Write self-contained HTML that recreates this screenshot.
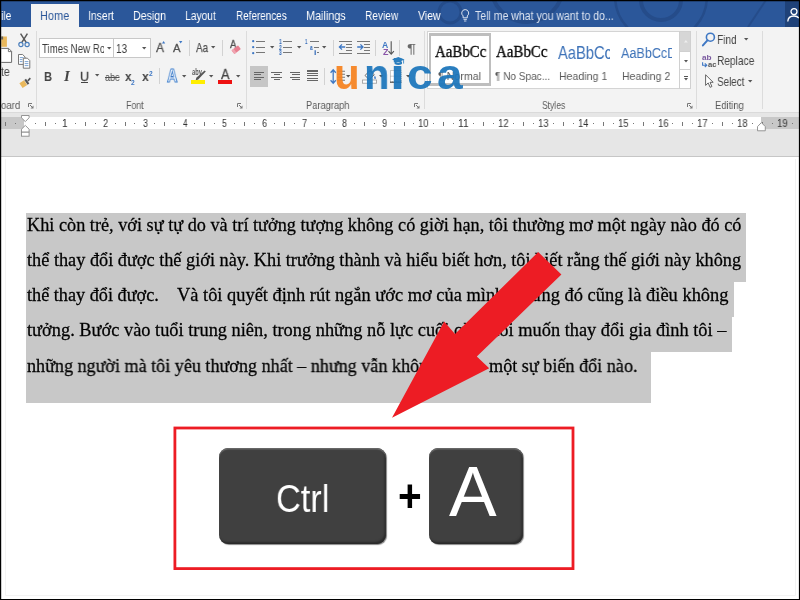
<!DOCTYPE html>
<html><head><meta charset="utf-8"><title>Word</title>
<style>
*{box-sizing:border-box;margin:0;padding:0}
html,body{width:800px;height:600px;overflow:hidden;background:#fff}
body{position:relative;font-family:"Liberation Sans",sans-serif;color:#444}
.abs{position:absolute}
svg{overflow:visible}
.t{position:absolute;white-space:pre;transform-origin:0 0;display:block;will-change:transform}
</style></head><body>
<div class="abs" style="left:0.00px;top:0.00px;width:800.00px;height:27.00px;background:#2b579a;"></div>
<svg class="abs" style="left:0.00px;top:0.00px;overflow:hidden;" width="800" height="27" viewBox="0 0 800 27"><g fill="none" stroke="#254c8a" stroke-width="4"><circle cx="527" cy="-14" r="36"/><circle cx="661" cy="0" r="20"/><circle cx="661" cy="-4" r="46" stroke-width="2.5"/><circle cx="450" cy="12" r="11" stroke-width="3"/><path d="M748 27 L766 0" stroke-width="2"/></g></svg>
<div class="abs" style="left:31.00px;top:3.60px;width:48.00px;height:24.00px;background:#f3f3f3;"></div>
<div class="abs" style="left:0.00px;top:26.50px;width:800.00px;height:86.00px;background:#f3f3f3;"></div>
<div class="abs" style="left:0.00px;top:112.40px;width:800.00px;height:44.60px;background:#e6e6e6;border-top:1px solid #dadada;border-bottom:1px solid #c6c6c6;"></div>
<div class="abs" style="left:0.00px;top:117.00px;width:800.00px;height:11.80px;background:#c8c8c8;"></div>
<div class="abs" style="left:23.50px;top:117.00px;width:737.30px;height:11.80px;background:#fff;"></div>
<span class="t" style="left:0.93px;top:8.65px;font-size:12.50px;line-height:14px;color:#fff;font-family:'Liberation Sans',sans-serif;transform:scale(0.8393,1.0000);">ile</span>
<span class="t" style="left:39.62px;top:8.65px;font-size:12.50px;line-height:14px;color:#2b579a;font-family:'Liberation Sans',sans-serif;transform:scale(0.8774,1.0000);">Home</span>
<span class="t" style="left:87.59px;top:8.65px;font-size:12.50px;line-height:14px;color:#fff;font-family:'Liberation Sans',sans-serif;transform:scale(0.8272,1.0000);">Insert</span>
<span class="t" style="left:133.15px;top:8.65px;font-size:12.50px;line-height:14px;color:#fff;font-family:'Liberation Sans',sans-serif;transform:scale(0.8495,1.0000);">Design</span>
<span class="t" style="left:185.18px;top:8.65px;font-size:12.50px;line-height:14px;color:#fff;font-family:'Liberation Sans',sans-serif;transform:scale(0.8219,1.0000);">Layout</span>
<span class="t" style="left:235.71px;top:8.65px;font-size:12.50px;line-height:14px;color:#fff;font-family:'Liberation Sans',sans-serif;transform:scale(0.7920,1.0000);">References</span>
<span class="t" style="left:306.14px;top:8.65px;font-size:12.50px;line-height:14px;color:#fff;font-family:'Liberation Sans',sans-serif;transform:scale(0.8649,1.0000);">Mailings</span>
<span class="t" style="left:364.69px;top:8.65px;font-size:12.50px;line-height:14px;color:#fff;font-family:'Liberation Sans',sans-serif;transform:scale(0.8105,1.0000);">Review</span>
<span class="t" style="left:417.92px;top:8.65px;font-size:12.50px;line-height:14px;color:#fff;font-family:'Liberation Sans',sans-serif;transform:scale(0.8396,1.0000);">View</span>
<span class="t" style="left:474.75px;top:8.65px;font-size:12.50px;line-height:14px;color:#dbe3f0;font-family:'Liberation Sans',sans-serif;transform:scale(0.8425,1.0000);">Tell me what you want to do...</span>
<div class="abs" style="left:26.30px;top:212.50px;width:720.20px;height:69.10px;background:#c8c8c8;"></div>
<div class="abs" style="left:26.30px;top:281.60px;width:707.30px;height:35.00px;background:#c8c8c8;"></div>
<div class="abs" style="left:26.30px;top:316.50px;width:705.40px;height:35.00px;background:#c8c8c8;"></div>
<div class="abs" style="left:26.30px;top:351.40px;width:624.70px;height:51.60px;background:#c8c8c8;"></div>
<span class="t" style="left:26.80px;top:213.71px;font-size:18.20px;line-height:20px;color:#000;font-family:'Liberation Serif',serif;transform:scale(1.0032,1.0580);-webkit-text-stroke:0.25px #000;">Khi còn trẻ, với sự tự do và trí tưởng tượng không có giời hạn, tôi thường mơ một ngày nào đó có</span>
<span class="t" style="left:27.10px;top:248.91px;font-size:18.20px;line-height:20px;color:#000;font-family:'Liberation Serif',serif;transform:scale(1.0041,1.0580);-webkit-text-stroke:0.25px #000;">thể thay đổi được thế giới này. Khi trưởng thành và hiểu biết hơn, tôi biết rằng thế giới này không</span>
<span class="t" style="left:27.30px;top:284.11px;font-size:18.20px;line-height:20px;color:#000;font-family:'Liberation Serif',serif;transform:scale(1.0015,1.0580);-webkit-text-stroke:0.25px #000;">thể thay đổi được.</span>
<span class="t" style="left:177.40px;top:284.11px;font-size:18.20px;line-height:20px;color:#000;font-family:'Liberation Serif',serif;transform:scale(1.0116,1.0580);-webkit-text-stroke:0.25px #000;">Và tôi quyết định rút ngắn ước mơ của mình</span>
<span class="t" style="left:513.26px;top:284.11px;font-size:18.20px;line-height:20px;color:#000;font-family:'Liberation Serif',serif;transform:scale(1.0148,1.0580);-webkit-text-stroke:0.25px #000;">nhưng đó cũng là điều không</span>
<span class="t" style="left:27.10px;top:319.31px;font-size:18.20px;line-height:20px;color:#000;font-family:'Liberation Serif',serif;transform:scale(1.0097,1.0580);-webkit-text-stroke:0.25px #000;">tưởng. Bước vào tuổi trung niên, trong những nỗ lực cuối cùng tôi muốn thay đổi gia đình tôi –</span>
<span class="t" style="left:26.90px;top:354.51px;font-size:18.20px;line-height:20px;color:#000;font-family:'Liberation Serif',serif;transform:scale(0.9950,1.0580);-webkit-text-stroke:0.25px #000;">những người mà tôi yêu thương nhất – nhưng vẫn không hề có</span>
<span class="t" style="left:488.60px;top:354.51px;font-size:18.20px;line-height:20px;color:#000;font-family:'Liberation Serif',serif;transform:scale(0.9980,1.0580);-webkit-text-stroke:0.25px #000;">một sự biến đổi nào.</span>
<svg class="abs" style="left:0.00px;top:0.00px;pointer-events:none;" width="800" height="600" viewBox="0 0 800 600"><polygon fill="#ed1c24" points="538.2,252 561.4,274.6 476.8,356.6 489.2,368.2 392,417.8 444.2,321.6 455,334"/></svg>
<svg class="abs" style="left:0.00px;top:0.00px;" width="800" height="600" viewBox="0 0 800 600"><rect x="174.9" y="428" width="398.1" height="140.6" fill="none" stroke="#ed1c24" stroke-width="2.8"/></svg>
<div class="abs" style="left:219.00px;top:447.60px;width:166.60px;height:96.00px;background:#404040;background:#404040;border-radius:9px;box-shadow:inset 0 1.5px 1px #6a6a6a, inset -1.5px -2px 2px #2a2a2a, 1px 1px 1px #888;"></div>
<div class="abs" style="left:428.60px;top:447.60px;width:94.00px;height:96.00px;background:#404040;background:#404040;border-radius:9px;box-shadow:inset 0 1.5px 1px #6a6a6a, inset -1.5px -2px 2px #2a2a2a, 1px 1px 1px #888;"></div>
<span class="t" style="left:275.96px;top:475.75px;font-size:39.60px;line-height:44px;color:#fff;font-family:'Liberation Sans',sans-serif;transform:scale(0.8684,1.0000);">Ctrl</span>
<span class="t" style="left:448.90px;top:452.10px;font-size:70.40px;line-height:79px;color:#fff;font-family:'Liberation Sans',sans-serif;transform:scale(1.0150,1.0000);">A</span>
<span class="t" style="left:397.58px;top:469.82px;font-size:40.20px;line-height:45px;color:#000;font-family:'Liberation Sans',sans-serif;transform:scale(1.0099,1.1560);font-weight:700;">+</span>
<div class="abs" style="left:36.00px;top:30.50px;width:1.00px;height:78.00px;background:#dcdcdc;"></div>
<div class="abs" style="left:245.80px;top:30.50px;width:1.00px;height:78.00px;background:#dcdcdc;"></div>
<div class="abs" style="left:423.50px;top:30.50px;width:1.00px;height:78.00px;background:#dcdcdc;"></div>
<div class="abs" style="left:695.50px;top:30.50px;width:1.00px;height:78.00px;background:#dcdcdc;"></div>
<div class="abs" style="left:761.50px;top:30.50px;width:1.00px;height:78.00px;background:#dcdcdc;"></div>
<span class="t" style="left:1.25px;top:98.75px;font-size:10.90px;line-height:12px;color:#5a5a5a;font-family:'Liberation Sans',sans-serif;transform:scale(0.8846,1.0000);">oard</span>
<span class="t" style="left:125.88px;top:98.75px;font-size:10.90px;line-height:12px;color:#5a5a5a;font-family:'Liberation Sans',sans-serif;transform:scale(0.8038,1.0000);">Font</span>
<span class="t" style="left:306.43px;top:98.75px;font-size:10.90px;line-height:12px;color:#5a5a5a;font-family:'Liberation Sans',sans-serif;transform:scale(0.8540,1.0000);">Paragraph</span>
<span class="t" style="left:541.61px;top:98.75px;font-size:10.90px;line-height:12px;color:#5a5a5a;font-family:'Liberation Sans',sans-serif;transform:scale(0.7812,1.0000);">Styles</span>
<span class="t" style="left:714.72px;top:98.75px;font-size:10.90px;line-height:12px;color:#5a5a5a;font-family:'Liberation Sans',sans-serif;transform:scale(0.8648,1.0000);">Editing</span>
<svg class="abs" style="left:27.50px;top:102.50px;" width="6" height="6" viewBox="0 0 6 6"><path d="M0.5 4V0.5H4" fill="none" stroke="#777" stroke-width="1"/><path d="M5.5 2.5V5.5H2.5Z" fill="#777"/><path d="M2 2L5 5" stroke="#777" stroke-width="1"/></svg>
<svg class="abs" style="left:237.00px;top:102.50px;" width="6" height="6" viewBox="0 0 6 6"><path d="M0.5 4V0.5H4" fill="none" stroke="#777" stroke-width="1"/><path d="M5.5 2.5V5.5H2.5Z" fill="#777"/><path d="M2 2L5 5" stroke="#777" stroke-width="1"/></svg>
<svg class="abs" style="left:414.00px;top:102.50px;" width="6" height="6" viewBox="0 0 6 6"><path d="M0.5 4V0.5H4" fill="none" stroke="#777" stroke-width="1"/><path d="M5.5 2.5V5.5H2.5Z" fill="#777"/><path d="M2 2L5 5" stroke="#777" stroke-width="1"/></svg>
<svg class="abs" style="left:686.50px;top:102.50px;" width="6" height="6" viewBox="0 0 6 6"><path d="M0.5 4V0.5H4" fill="none" stroke="#777" stroke-width="1"/><path d="M5.5 2.5V5.5H2.5Z" fill="#777"/><path d="M2 2L5 5" stroke="#777" stroke-width="1"/></svg>
<div class="abs" style="left:39.30px;top:38.20px;width:75.20px;height:19.90px;background:#fff;border:1px solid #c8c8c8;"></div>
<div class="abs" style="left:114.40px;top:38.20px;width:36.40px;height:19.90px;background:#fff;border:1px solid #c8c8c8;border-left:0;"></div>
<div class="abs" style="left:41px;top:39.5px;width:62.8px;height:17px;overflow:hidden">
<span class="t" style="left:1.36px;top:2.15px;font-size:12.20px;line-height:14px;color:#3c3c3c;font-family:'Liberation Sans',sans-serif;transform:scale(0.7939,1.0000);">Times New Ro</span>
</div>
<svg class="abs" style="left:106.70px;top:46.50px;" width="4.4" height="2.6" viewBox="0 0 4.4 2.6"><path d="M0 0H4.4 L2.2 2.6Z" fill="#555"/></svg>
<span class="t" style="left:116.46px;top:41.65px;font-size:12.20px;line-height:14px;color:#3c3c3c;font-family:'Liberation Sans',sans-serif;transform:scale(0.8197,1.0000);">13</span>
<svg class="abs" style="left:142.30px;top:46.50px;" width="4.4" height="2.6" viewBox="0 0 4.4 2.6"><path d="M0 0H4.4 L2.2 2.6Z" fill="#555"/></svg>
<svg class="abs" style="left:1.00px;top:35.50px;" width="12" height="28" viewBox="0 0 12 28"><rect x="0.3" y="0.5" width="5.6" height="10.3" fill="#e9b85c"/><rect x="0.3" y="0.5" width="1.8" height="3" fill="#666"/>
<path d="M0.3 12.4H7.6L10.6 15.4V26.4H0.3" fill="#fff" stroke="#6a6a6a" stroke-width="1"/><path d="M7.4 12.4V15.6H10.6" fill="none" stroke="#6a6a6a" stroke-width="0.9"/></svg>
<span class="t" style="left:1.43px;top:65.35px;font-size:12.30px;line-height:14px;color:#444;font-family:'Liberation Sans',sans-serif;transform:scale(0.8421,1.0000);">te</span>
<svg class="abs" style="left:17.50px;top:33.00px;" width="12" height="14.5" viewBox="0 0 12 14.5"><path d="M2.6 0.6L8.3 9.6M9.4 0.6L3.7 9.6" stroke="#595959" stroke-width="1.5" fill="none"/>
<circle cx="2.9" cy="11.5" r="2.1" fill="none" stroke="#4a7ebb" stroke-width="1.2"/><circle cx="9.1" cy="11.5" r="2.1" fill="none" stroke="#4a7ebb" stroke-width="1.2"/></svg>
<svg class="abs" style="left:17.80px;top:54.40px;" width="13" height="15" viewBox="0 0 13 15"><path d="M0.5 0.5H4.6L7 2.9V10.4H0.5Z" fill="#fff" stroke="#6a6a6a" stroke-width="0.9"/>
<path d="M1.8 3.6H5.4M1.8 5.6H4.4M1.8 7.6H4.4" stroke="#5b8dc7" stroke-width="0.8"/>
<path d="M5.3 4.2H9.4L11.8 6.6V14.2H5.3Z" fill="#fff" stroke="#6a6a6a" stroke-width="0.9"/>
<path d="M6.7 7.6H10.4M6.7 9.6H10.4M6.7 11.6H10.4" stroke="#5b8dc7" stroke-width="0.8"/></svg>
<svg class="abs" style="left:18.50px;top:77.00px;" width="12.5" height="12" viewBox="0 0 12.5 12"><path d="M0.4 6.2L5 3.2L8.2 8L3.6 11Z" fill="#e9b85c"/>
<path d="M5.3 2.9L7 1.8L10.3 6.6L8.6 7.8Z" fill="#555"/><path d="M8.2 3.2L10.8 0.6L11.9 1.7L9.4 4.6Z" fill="#555"/></svg>
<span class="t" style="left:155.60px;top:40.30px;font-size:13.20px;line-height:15px;color:#505050;font-family:'Liberation Sans',sans-serif;transform:scale(0.9091,1.0000);-webkit-text-stroke:0.3px #505050;">A</span>
<svg class="abs" style="left:162.20px;top:41.00px;" width="3.2" height="2.6" viewBox="0 0 3.2 2.6"><path d="M0 2.6L1.6 0L3.2 2.6Z" fill="#3f78c4"/></svg>
<span class="t" style="left:173.10px;top:42.15px;font-size:11.40px;line-height:13px;color:#505050;font-family:'Liberation Sans',sans-serif;transform:scale(0.9868,1.0000);-webkit-text-stroke:0.3px #505050;">A</span>
<svg class="abs" style="left:179.20px;top:41.00px;" width="3.4" height="2.6" viewBox="0 0 3.4 2.6"><path d="M0 0H3.4L1.7 2.6Z" fill="#3f78c4"/></svg>
<div class="abs" style="left:188.90px;top:40.00px;width:1.00px;height:15.50px;background:#d2d2d2;"></div>
<span class="t" style="left:196.00px;top:40.65px;font-size:12.20px;line-height:14px;color:#505050;font-family:'Liberation Sans',sans-serif;transform:scale(0.8054,1.0000);-webkit-text-stroke:0.25px #505050;">Aa</span>
<svg class="abs" style="left:211.20px;top:46.10px;" width="4.4" height="2.6" viewBox="0 0 4.4 2.6"><path d="M0 0H4.4 L2.2 2.6Z" fill="#555"/></svg>
<div class="abs" style="left:221.60px;top:40.00px;width:1.00px;height:15.50px;background:#d2d2d2;"></div>
<span class="t" style="left:230.00px;top:39.45px;font-size:10.20px;line-height:12px;color:#505050;font-family:'Liberation Sans',sans-serif;transform:scale(0.9265,1.0000);-webkit-text-stroke:0.3px #505050;">A</span>
<svg class="abs" style="left:230.80px;top:45.00px;" width="10" height="10" viewBox="0 0 10 10"><g transform="rotate(-38 5 5)"><rect x="1.2" y="2.6" width="8.2" height="4.6" rx="0.6" fill="#e77f90"/><rect x="1.2" y="2.6" width="2.6" height="4.6" fill="#f0a5b1"/></g></svg>
<span class="t" style="left:43.79px;top:70.10px;font-size:12.70px;line-height:14px;color:#444;font-family:'Liberation Sans',sans-serif;transform:scale(0.8846,1.0000);font-weight:700;">B</span>
<span class="t" style="left:63.91px;top:69.35px;font-size:13.80px;line-height:15px;color:#444;font-family:'Liberation Serif',serif;transform:scale(1.0847,1.0000);font-weight:700;font-style:italic;">I</span>
<span class="t" style="left:79.73px;top:69.90px;font-size:12.70px;line-height:14px;color:#444;font-family:'Liberation Sans',sans-serif;transform:scale(0.9722,1.0000);-webkit-text-stroke:0.3px #444;">U</span>
<div class="abs" style="left:80.70px;top:82.40px;width:7.00px;height:1.00px;background:#444;"></div>
<svg class="abs" style="left:95.20px;top:74.30px;" width="4.4" height="2.6" viewBox="0 0 4.4 2.6"><path d="M0 0H4.4 L2.2 2.6Z" fill="#555"/></svg>
<span class="t" style="left:104.60px;top:71.10px;font-size:11.20px;line-height:13px;color:#505050;font-family:'Liberation Sans',sans-serif;transform:scale(0.8035,1.0000);text-decoration:line-through;">abc</span>
<span class="t" style="left:124.51px;top:69.30px;font-size:13.50px;line-height:15px;color:#444;font-family:'Liberation Sans',sans-serif;transform:scale(0.8767,1.0000);font-weight:700;">x</span>
<span class="t" style="left:131.40px;top:78.80px;font-size:6.60px;line-height:7px;color:#3f78c4;font-family:'Liberation Sans',sans-serif;transform:scale(1.0000,1.0000);font-weight:700;">2</span>
<span class="t" style="left:142.31px;top:69.30px;font-size:13.50px;line-height:15px;color:#444;font-family:'Liberation Sans',sans-serif;transform:scale(0.9041,1.0000);font-weight:700;">x</span>
<span class="t" style="left:149.40px;top:70.20px;font-size:6.60px;line-height:7px;color:#3f78c4;font-family:'Liberation Sans',sans-serif;transform:scale(1.0000,1.0000);font-weight:700;">2</span>
<div class="abs" style="left:158.90px;top:67.60px;width:1.00px;height:16.40px;background:#d2d2d2;"></div>
<span class="t" style="left:166.87px;top:66.10px;font-size:17.60px;line-height:20px;color:#fff;font-family:'Liberation Sans',sans-serif;transform:scale(0.8305,1.0000);font-weight:700;-webkit-text-stroke:1px #4a86cf;text-shadow:0 0 1.5px #9cc0ea;">A</span>
<div class="abs" style="left:171.40px;top:75.60px;width:1.40px;height:1.60px;background:#3f78c4;"></div>
<svg class="abs" style="left:181.50px;top:74.50px;" width="4.4" height="2.6" viewBox="0 0 4.4 2.6"><path d="M0 0H4.4 L2.2 2.6Z" fill="#555"/></svg>
<span class="t" style="left:191.71px;top:67.10px;font-size:9.00px;line-height:10px;color:#505050;font-family:'Liberation Sans',sans-serif;transform:scale(0.6358,1.0000);font-weight:700;">aby</span>
<svg class="abs" style="left:194.00px;top:69.50px;" width="12" height="11" viewBox="0 0 12 11"><path d="M10.6 0.4L11.8 1.5L4.2 9.4L1.6 10.4L2.3 7.8Z" fill="#555"/></svg>
<div class="abs" style="left:191.30px;top:80.10px;width:14.00px;height:3.80px;background:#ffee00;"></div>
<svg class="abs" style="left:209.10px;top:74.50px;" width="4.4" height="2.6" viewBox="0 0 4.4 2.6"><path d="M0 0H4.4 L2.2 2.6Z" fill="#555"/></svg>
<span class="t" style="left:221.30px;top:66.40px;font-size:14.20px;line-height:16px;color:#444;font-family:'Liberation Sans',sans-serif;transform:scale(0.9043,1.0000);-webkit-text-stroke:0.3px #444;">A</span>
<div class="abs" style="left:218.10px;top:80.10px;width:14.00px;height:3.80px;background:#ee1111;"></div>
<svg class="abs" style="left:236.30px;top:74.50px;" width="4.4" height="2.6" viewBox="0 0 4.4 2.6"><path d="M0 0H4.4 L2.2 2.6Z" fill="#555"/></svg>
<svg class="abs" style="left:251.80px;top:40.20px;" width="2.4" height="2.4" viewBox="0 0 2.4 2.4"><circle cx="1.2" cy="1.2" r="1.15" fill="#3f78c4"/></svg>
<div class="abs" style="left:256.30px;top:40.80px;width:8.70px;height:1.20px;background:#777;"></div>
<svg class="abs" style="left:251.80px;top:46.05px;" width="2.4" height="2.4" viewBox="0 0 2.4 2.4"><circle cx="1.2" cy="1.2" r="1.15" fill="#3f78c4"/></svg>
<div class="abs" style="left:256.30px;top:46.65px;width:8.70px;height:1.20px;background:#777;"></div>
<svg class="abs" style="left:251.80px;top:51.60px;" width="2.4" height="2.4" viewBox="0 0 2.4 2.4"><circle cx="1.2" cy="1.2" r="1.15" fill="#3f78c4"/></svg>
<div class="abs" style="left:256.30px;top:52.20px;width:8.70px;height:1.20px;background:#777;"></div>
<svg class="abs" style="left:269.60px;top:46.10px;" width="4.4" height="2.6" viewBox="0 0 4.4 2.6"><path d="M0 0H4.4 L2.2 2.6Z" fill="#555"/></svg>
<span class="t" style="left:278.88px;top:38.00px;font-size:6.40px;line-height:7px;color:#2f68b8;font-family:'Liberation Sans',sans-serif;transform:scale(0.8000,1.0000);font-weight:700;">1</span>
<div class="abs" style="left:283.40px;top:40.80px;width:8.70px;height:1.20px;background:#777;"></div>
<span class="t" style="left:279.05px;top:43.85px;font-size:6.40px;line-height:7px;color:#2f68b8;font-family:'Liberation Sans',sans-serif;transform:scale(0.7742,1.0000);font-weight:700;">2</span>
<div class="abs" style="left:283.40px;top:46.65px;width:8.70px;height:1.20px;background:#777;"></div>
<span class="t" style="left:279.05px;top:49.40px;font-size:6.40px;line-height:7px;color:#2f68b8;font-family:'Liberation Sans',sans-serif;transform:scale(0.7742,1.0000);font-weight:700;">3</span>
<div class="abs" style="left:283.40px;top:52.20px;width:8.70px;height:1.20px;background:#777;"></div>
<svg class="abs" style="left:296.60px;top:46.10px;" width="4.4" height="2.6" viewBox="0 0 4.4 2.6"><path d="M0 0H4.4 L2.2 2.6Z" fill="#555"/></svg>
<span class="t" style="left:305.33px;top:38.00px;font-size:6.40px;line-height:7px;color:#2f68b8;font-family:'Liberation Sans',sans-serif;transform:scale(0.6667,1.0000);font-weight:700;">1</span>
<div class="abs" style="left:310.30px;top:40.80px;width:8.70px;height:1.20px;background:#777;"></div>
<span class="t" style="left:310.05px;top:43.80px;font-size:6.40px;line-height:7px;color:#2f68b8;font-family:'Liberation Sans',sans-serif;transform:scale(0.7647,1.0000);font-weight:700;">a</span>
<div class="abs" style="left:314.30px;top:46.65px;width:4.70px;height:1.20px;background:#777;"></div>
<span class="t" style="left:313.57px;top:49.30px;font-size:6.40px;line-height:7px;color:#2f68b8;font-family:'Liberation Sans',sans-serif;transform:scale(1.3333,1.0000);font-weight:700;">i</span>
<div class="abs" style="left:316.70px;top:52.20px;width:2.30px;height:1.20px;background:#777;"></div>
<svg class="abs" style="left:322.20px;top:46.10px;" width="4.4" height="2.6" viewBox="0 0 4.4 2.6"><path d="M0 0H4.4 L2.2 2.6Z" fill="#555"/></svg>
<div class="abs" style="left:332.50px;top:40.00px;width:1.00px;height:15.50px;background:#d2d2d2;"></div>
<div class="abs" style="left:339.10px;top:40.80px;width:12.50px;height:1.20px;background:#777;"></div>
<div class="abs" style="left:339.10px;top:52.80px;width:12.50px;height:1.20px;background:#777;"></div>
<div class="abs" style="left:346.00px;top:43.80px;width:5.60px;height:1.20px;background:#777;"></div>
<div class="abs" style="left:346.00px;top:46.80px;width:5.60px;height:1.20px;background:#777;"></div>
<div class="abs" style="left:346.00px;top:49.80px;width:5.60px;height:1.20px;background:#777;"></div>
<svg class="abs" style="left:338.80px;top:44.40px;" width="6.4" height="6" viewBox="0 0 6.4 6"><path d="M0.4 3H6.2M3 0.4L0.4 3L3 5.6" fill="none" stroke="#3f78c4" stroke-width="1.3"/></svg>
<div class="abs" style="left:357.20px;top:40.80px;width:12.40px;height:1.20px;background:#777;"></div>
<div class="abs" style="left:357.20px;top:52.80px;width:12.40px;height:1.20px;background:#777;"></div>
<div class="abs" style="left:364.10px;top:43.80px;width:5.50px;height:1.20px;background:#777;"></div>
<div class="abs" style="left:364.10px;top:46.80px;width:5.50px;height:1.20px;background:#777;"></div>
<div class="abs" style="left:364.10px;top:49.80px;width:5.50px;height:1.20px;background:#777;"></div>
<svg class="abs" style="left:356.80px;top:44.40px;" width="6.4" height="6" viewBox="0 0 6.4 6"><path d="M0.2 3H6M3.4 0.4L6 3L3.4 5.6" fill="none" stroke="#3f78c4" stroke-width="1.3"/></svg>
<div class="abs" style="left:375.20px;top:40.00px;width:1.00px;height:15.50px;background:#d2d2d2;"></div>
<span class="t" style="left:382.10px;top:39.65px;font-size:8.60px;line-height:10px;color:#3f78c4;font-family:'Liberation Sans',sans-serif;transform:scale(0.9828,1.0000);font-weight:700;">A</span>
<span class="t" style="left:382.58px;top:47.55px;font-size:8.20px;line-height:9px;color:#8a55a8;font-family:'Liberation Sans',sans-serif;transform:scale(1.0870,1.0000);font-weight:700;">Z</span>
<svg class="abs" style="left:388.00px;top:40.50px;" width="6.4" height="14" viewBox="0 0 6.4 14"><path d="M3.2 0.3V13M0.5 10.2L3.2 13.2L5.9 10.2" fill="none" stroke="#555" stroke-width="1.1"/></svg>
<div class="abs" style="left:399.30px;top:40.00px;width:1.00px;height:15.50px;background:#d2d2d2;"></div>
<span class="t" style="left:406.67px;top:40.85px;font-size:13.40px;line-height:15px;color:#686868;font-family:'Liberation Sans',sans-serif;transform:scale(1.2623,1.0000);">¶</span>
<div class="abs" style="left:250.00px;top:66.20px;width:17.50px;height:20.40px;background:#c6c6c6;"></div>
<div class="abs" style="left:253.80px;top:71.75px;width:10.00px;height:1.10px;background:#666;"></div>
<div class="abs" style="left:271.00px;top:71.75px;width:11.00px;height:1.10px;background:#666;"></div>
<div class="abs" style="left:289.70px;top:71.75px;width:10.30px;height:1.10px;background:#666;"></div>
<div class="abs" style="left:253.80px;top:74.25px;width:7.20px;height:1.10px;background:#666;"></div>
<div class="abs" style="left:273.50px;top:74.25px;width:6.30px;height:1.10px;background:#666;"></div>
<div class="abs" style="left:292.00px;top:74.25px;width:8.00px;height:1.10px;background:#666;"></div>
<div class="abs" style="left:253.80px;top:76.65px;width:10.00px;height:1.10px;background:#666;"></div>
<div class="abs" style="left:271.00px;top:76.65px;width:11.00px;height:1.10px;background:#666;"></div>
<div class="abs" style="left:289.70px;top:76.65px;width:10.30px;height:1.10px;background:#666;"></div>
<div class="abs" style="left:253.80px;top:79.15px;width:7.20px;height:1.10px;background:#666;"></div>
<div class="abs" style="left:273.50px;top:79.15px;width:6.30px;height:1.10px;background:#666;"></div>
<div class="abs" style="left:292.00px;top:79.15px;width:8.00px;height:1.10px;background:#666;"></div>
<div class="abs" style="left:307.00px;top:70.45px;width:11.20px;height:1.10px;background:#666;"></div>
<div class="abs" style="left:307.00px;top:72.75px;width:11.20px;height:1.10px;background:#666;"></div>
<div class="abs" style="left:307.00px;top:75.15px;width:11.20px;height:1.10px;background:#666;"></div>
<div class="abs" style="left:307.00px;top:77.55px;width:11.20px;height:1.10px;background:#666;"></div>
<div class="abs" style="left:307.00px;top:79.95px;width:11.20px;height:1.10px;background:#666;"></div>
<div class="abs" style="left:323.50px;top:67.60px;width:1.00px;height:17.40px;background:#d2d2d2;"></div>
<svg class="abs" style="left:329.50px;top:68.50px;" width="16" height="15.5" viewBox="0 0 16 15.5"><path d="M3.2 1V14M0.6 3.8L3.2 0.8L5.8 3.8M0.6 11.2L3.2 14.2L5.8 11.2" fill="none" stroke="#3f78c4" stroke-width="1.3"/><path d="M7.5 2.2H15M7.5 5.2H15M7.5 8.2H15M7.5 11.2H15" stroke="#777" stroke-width="1.1"/></svg>
<svg class="abs" style="left:346.30px;top:74.50px;" width="4.4" height="2.6" viewBox="0 0 4.4 2.6"><path d="M0 0H4.4 L2.2 2.6Z" fill="#555"/></svg>
<svg class="abs" style="left:362.00px;top:69.00px;" width="15" height="15" viewBox="0 0 15 15"><path d="M3 6.5L8 1.5L12.2 5.8L7.2 10.6Z" fill="#fff" stroke="#666" stroke-width="1"/><path d="M12.8 6.4Q14.6 9 13.4 10Q12 10.4 12.2 8.6Z" fill="#3f78c4"/><rect x="0.4" y="11" width="14.2" height="3.2" fill="#fff" stroke="#999" stroke-width="0.8"/></svg>
<svg class="abs" style="left:379.30px;top:74.50px;" width="4.4" height="2.6" viewBox="0 0 4.4 2.6"><path d="M0 0H4.4 L2.2 2.6Z" fill="#555"/></svg>
<svg class="abs" style="left:390.00px;top:69.50px;" width="11.5" height="12.5" viewBox="0 0 11.5 12.5"><rect x="0.5" y="0.5" width="10.5" height="11.5" fill="#fff" stroke="#999" stroke-width="1" stroke-dasharray="1 1"/><path d="M0.5 6.2H11M5.7 0.5V12" stroke="#999" stroke-width="0.9" stroke-dasharray="1 1"/><path d="M0 12.2H11.5" stroke="#555" stroke-width="1.3"/></svg>
<svg class="abs" style="left:405.80px;top:74.50px;" width="4.4" height="2.6" viewBox="0 0 4.4 2.6"><path d="M0 0H4.4 L2.2 2.6Z" fill="#555"/></svg>
<div class="abs" style="left:427.00px;top:31.40px;width:263.80px;height:57.20px;background:#fff;border:1px solid #d4d4d4;"></div>
<div class="abs" style="left:428.60px;top:33.10px;width:62.50px;height:52.80px;background:#bebebe;"></div>
<div class="abs" style="left:431.10px;top:35.60px;width:57.50px;height:47.80px;background:#fff;"></div>
<span class="t" style="left:434.81px;top:42.65px;font-size:15.90px;line-height:18px;color:#000;font-family:'Liberation Serif',serif;transform:scale(0.9354,1.0000);-webkit-text-stroke:0.3px #000;">AaBbCc</span>
<span class="t" style="left:496.41px;top:42.65px;font-size:15.90px;line-height:18px;color:#000;font-family:'Liberation Serif',serif;transform:scale(0.9391,1.0000);-webkit-text-stroke:0.3px #000;">AaBbCc</span>
<span class="t" style="left:438.03px;top:69.45px;font-size:11.60px;line-height:13px;color:#5a5a5a;font-family:'Liberation Sans',sans-serif;transform:scale(0.9190,1.0000);">¶ Normal</span>
<span class="t" style="left:494.95px;top:69.45px;font-size:11.60px;line-height:13px;color:#5a5a5a;font-family:'Liberation Sans',sans-serif;transform:scale(0.8666,1.0000);">¶ No Spac...</span>
<div class="abs" style="left:556px;top:38px;width:53.8px;height:26px;overflow:hidden">
<span class="t" style="left:2.40px;top:4.70px;font-size:17.80px;line-height:20px;color:#3d72b8;font-family:'Liberation Sans',sans-serif;transform:scale(0.8273,1.0000);">AaBbCc</span>
</div>
<span class="t" style="left:559.48px;top:69.15px;font-size:11.60px;line-height:13px;color:#5a5a5a;font-family:'Liberation Sans',sans-serif;transform:scale(0.9125,1.0000);">Heading 1</span>
<div class="abs" style="left:619px;top:38px;width:53.4px;height:26px;overflow:hidden">
<span class="t" style="left:2.25px;top:5.95px;font-size:15.20px;line-height:17px;color:#3d72b8;font-family:'Liberation Sans',sans-serif;transform:scale(0.8294,1.0000);">AaBbCcD</span>
</div>
<span class="t" style="left:622.28px;top:69.15px;font-size:11.60px;line-height:13px;color:#5a5a5a;font-family:'Liberation Sans',sans-serif;transform:scale(0.9125,1.0000);">Heading 2</span>
<div class="abs" style="left:679.40px;top:31.40px;width:11.40px;height:57.20px;background:#fff;border:1px solid #d0d0d0;"></div>
<div class="abs" style="left:680.00px;top:32.00px;width:10.20px;height:19.40px;background:#d6d6d6;"></div>
<svg class="abs" style="left:683.70px;top:40.00px;" width="3.8" height="2.4" viewBox="0 0 3.8 2.4"><path d="M0 2.4L1.9 0L3.8 2.4Z" fill="#eee"/></svg>
<div class="abs" style="left:679.40px;top:51.20px;width:11.40px;height:1.00px;background:#d0d0d0;"></div>
<div class="abs" style="left:679.40px;top:69.00px;width:11.40px;height:1.00px;background:#d0d0d0;"></div>
<svg class="abs" style="left:683.60px;top:59.60px;" width="4" height="2.4" viewBox="0 0 4 2.4"><path d="M0 0H4 L2 2.4Z" fill="#555"/></svg>
<div class="abs" style="left:683.50px;top:75.80px;width:4.20px;height:1.00px;background:#555;"></div>
<svg class="abs" style="left:683.60px;top:77.80px;" width="4" height="2.4" viewBox="0 0 4 2.4"><path d="M0 0H4 L2 2.4Z" fill="#555"/></svg>
<svg class="abs" style="left:702.00px;top:32.00px;" width="14" height="15" viewBox="0 0 14 15"><circle cx="8.4" cy="5.2" r="4" fill="none" stroke="#3f78c4" stroke-width="1.6"/><path d="M5.6 8.2L0.9 13.4" stroke="#3f78c4" stroke-width="2" stroke-linecap="round"/></svg>
<span class="t" style="left:717.07px;top:32.85px;font-size:12.20px;line-height:14px;color:#444;font-family:'Liberation Sans',sans-serif;transform:scale(0.8265,1.0000);">Find</span>
<svg class="abs" style="left:743.70px;top:37.90px;" width="4.4" height="2.6" viewBox="0 0 4.4 2.6"><path d="M0 0H4.4 L2.2 2.6Z" fill="#555"/></svg>
<span class="t" style="left:701.78px;top:53.10px;font-size:7.60px;line-height:9px;color:#7a5aa0;font-family:'Liberation Sans',sans-serif;transform:scale(1.0843,1.0000);font-weight:700;">ab</span>
<span class="t" style="left:707.60px;top:59.50px;font-size:7.60px;line-height:9px;color:#555;font-family:'Liberation Sans',sans-serif;transform:scale(0.9750,1.0000);font-weight:700;">ac</span>
<svg class="abs" style="left:701.60px;top:61.50px;" width="5.5" height="5.5" viewBox="0 0 5.5 5.5"><path d="M0.6 0.3V3.2H4.6M2.8 1.4L4.8 3.2L2.8 5" fill="none" stroke="#3f78c4" stroke-width="1.1"/></svg>
<span class="t" style="left:717.07px;top:53.75px;font-size:12.20px;line-height:14px;color:#444;font-family:'Liberation Sans',sans-serif;transform:scale(0.8337,1.0000);">Replace</span>
<svg class="abs" style="left:704.60px;top:73.60px;" width="9" height="14.5" viewBox="0 0 9 14.5"><path d="M0.6 0.8V11.4L3.2 8.9L5.1 13.3L6.9 12.5L5 8.3H8.2Z" fill="#fff" stroke="#555" stroke-width="0.9" stroke-linejoin="round"/></svg>
<span class="t" style="left:717.42px;top:74.65px;font-size:12.20px;line-height:14px;color:#444;font-family:'Liberation Sans',sans-serif;transform:scale(0.8072,1.0000);">Select</span>
<svg class="abs" style="left:748.00px;top:79.50px;" width="4.4" height="2.6" viewBox="0 0 4.4 2.6"><path d="M0 0H4.4 L2.2 2.6Z" fill="#555"/></svg>
<svg class="abs" style="left:461.00px;top:8.50px;" width="8.5" height="13" viewBox="0 0 8.5 13"><path d="M4.2 0.6A3.5 3.5 0 0 1 6.3 6.9V8.8H2.1V6.9A3.5 3.5 0 0 1 4.2 0.6Z" fill="none" stroke="#dbe3f0" stroke-width="1"/><path d="M2.5 10.4H5.9M3 12H5.4" stroke="#dbe3f0" stroke-width="0.9"/></svg>
<div class="abs" style="left:784.50px;top:1.00px;width:15.00px;height:25.50px;background:#1f4279;"></div>
<svg class="abs" style="left:786.50px;top:7.50px;" width="12" height="14" viewBox="0 0 12 14"><circle cx="7" cy="3.6" r="3" fill="none" stroke="#fff" stroke-width="1.3"/><path d="M0.8 13.5Q1 8 7 8Q10 8 12 10" fill="none" stroke="#fff" stroke-width="1.3"/></svg>
<div class="abs" style="left:5.02px;top:121.90px;width:0.90px;height:4.20px;background:#777;"></div>
<div class="abs" style="left:14.94px;top:123.20px;width:1.00px;height:1.10px;background:#777;"></div>
<div class="abs" style="left:34.86px;top:123.20px;width:1.00px;height:1.10px;background:#777;"></div>
<div class="abs" style="left:44.88px;top:121.90px;width:0.90px;height:4.20px;background:#777;"></div>
<div class="abs" style="left:54.79px;top:123.20px;width:1.00px;height:1.10px;background:#777;"></div>
<span class="t" style="left:62.39px;top:118.05px;font-size:10.20px;line-height:12px;color:#333;font-family:'Liberation Sans',sans-serif;transform:scale(0.9545,1.0000);">1</span>
<div class="abs" style="left:74.71px;top:123.20px;width:1.00px;height:1.10px;background:#777;"></div>
<div class="abs" style="left:84.73px;top:121.90px;width:0.90px;height:4.20px;background:#777;"></div>
<div class="abs" style="left:94.64px;top:123.20px;width:1.00px;height:1.10px;background:#777;"></div>
<span class="t" style="left:102.55px;top:118.05px;font-size:10.20px;line-height:12px;color:#333;font-family:'Liberation Sans',sans-serif;transform:scale(0.8936,1.0000);">2</span>
<div class="abs" style="left:114.56px;top:123.20px;width:1.00px;height:1.10px;background:#777;"></div>
<div class="abs" style="left:124.58px;top:121.90px;width:0.90px;height:4.20px;background:#777;"></div>
<div class="abs" style="left:134.49px;top:123.20px;width:1.00px;height:1.10px;background:#777;"></div>
<span class="t" style="left:142.50px;top:118.05px;font-size:10.20px;line-height:12px;color:#333;font-family:'Liberation Sans',sans-serif;transform:scale(0.8750,1.0000);">3</span>
<div class="abs" style="left:154.41px;top:123.20px;width:1.00px;height:1.10px;background:#777;"></div>
<div class="abs" style="left:164.43px;top:121.90px;width:0.90px;height:4.20px;background:#777;"></div>
<div class="abs" style="left:174.34px;top:123.20px;width:1.00px;height:1.10px;background:#777;"></div>
<span class="t" style="left:182.54px;top:118.05px;font-size:10.20px;line-height:12px;color:#333;font-family:'Liberation Sans',sans-serif;transform:scale(0.8077,1.0000);">4</span>
<div class="abs" style="left:194.26px;top:123.20px;width:1.00px;height:1.10px;background:#777;"></div>
<div class="abs" style="left:204.28px;top:121.90px;width:0.90px;height:4.20px;background:#777;"></div>
<div class="abs" style="left:214.19px;top:123.20px;width:1.00px;height:1.10px;background:#777;"></div>
<span class="t" style="left:222.21px;top:118.05px;font-size:10.20px;line-height:12px;color:#333;font-family:'Liberation Sans',sans-serif;transform:scale(0.8571,1.0000);">5</span>
<div class="abs" style="left:234.11px;top:123.20px;width:1.00px;height:1.10px;background:#777;"></div>
<div class="abs" style="left:244.13px;top:121.90px;width:0.90px;height:4.20px;background:#777;"></div>
<div class="abs" style="left:254.04px;top:123.20px;width:1.00px;height:1.10px;background:#777;"></div>
<span class="t" style="left:261.95px;top:118.05px;font-size:10.20px;line-height:12px;color:#333;font-family:'Liberation Sans',sans-serif;transform:scale(0.8936,1.0000);">6</span>
<div class="abs" style="left:273.96px;top:123.20px;width:1.00px;height:1.10px;background:#777;"></div>
<div class="abs" style="left:283.98px;top:121.90px;width:0.90px;height:4.20px;background:#777;"></div>
<div class="abs" style="left:293.89px;top:123.20px;width:1.00px;height:1.10px;background:#777;"></div>
<span class="t" style="left:301.80px;top:118.05px;font-size:10.20px;line-height:12px;color:#333;font-family:'Liberation Sans',sans-serif;transform:scale(0.8936,1.0000);">7</span>
<div class="abs" style="left:313.81px;top:123.20px;width:1.00px;height:1.10px;background:#777;"></div>
<div class="abs" style="left:323.82px;top:121.90px;width:0.90px;height:4.20px;background:#777;"></div>
<div class="abs" style="left:333.74px;top:123.20px;width:1.00px;height:1.10px;background:#777;"></div>
<span class="t" style="left:341.75px;top:118.05px;font-size:10.20px;line-height:12px;color:#333;font-family:'Liberation Sans',sans-serif;transform:scale(0.8750,1.0000);">8</span>
<div class="abs" style="left:353.66px;top:123.20px;width:1.00px;height:1.10px;background:#777;"></div>
<div class="abs" style="left:363.68px;top:121.90px;width:0.90px;height:4.20px;background:#777;"></div>
<div class="abs" style="left:373.59px;top:123.20px;width:1.00px;height:1.10px;background:#777;"></div>
<span class="t" style="left:381.50px;top:118.05px;font-size:10.20px;line-height:12px;color:#333;font-family:'Liberation Sans',sans-serif;transform:scale(0.8936,1.0000);">9</span>
<div class="abs" style="left:393.51px;top:123.20px;width:1.00px;height:1.10px;background:#777;"></div>
<div class="abs" style="left:403.52px;top:121.90px;width:0.90px;height:4.20px;background:#777;"></div>
<div class="abs" style="left:413.44px;top:123.20px;width:1.00px;height:1.10px;background:#777;"></div>
<span class="t" style="left:418.46px;top:118.05px;font-size:10.20px;line-height:12px;color:#333;font-family:'Liberation Sans',sans-serif;transform:scale(0.9216,1.0000);">10</span>
<div class="abs" style="left:433.36px;top:123.20px;width:1.00px;height:1.10px;background:#777;"></div>
<div class="abs" style="left:443.38px;top:121.90px;width:0.90px;height:4.20px;background:#777;"></div>
<div class="abs" style="left:453.29px;top:123.20px;width:1.00px;height:1.10px;background:#777;"></div>
<span class="t" style="left:458.24px;top:118.05px;font-size:10.20px;line-height:12px;color:#333;font-family:'Liberation Sans',sans-serif;transform:scale(1.0108,1.0000);">11</span>
<div class="abs" style="left:473.21px;top:123.20px;width:1.00px;height:1.10px;background:#777;"></div>
<div class="abs" style="left:483.23px;top:121.90px;width:0.90px;height:4.20px;background:#777;"></div>
<div class="abs" style="left:493.14px;top:123.20px;width:1.00px;height:1.10px;background:#777;"></div>
<span class="t" style="left:498.16px;top:118.05px;font-size:10.20px;line-height:12px;color:#333;font-family:'Liberation Sans',sans-serif;transform:scale(0.9307,1.0000);">12</span>
<div class="abs" style="left:513.06px;top:123.20px;width:1.00px;height:1.10px;background:#777;"></div>
<div class="abs" style="left:523.07px;top:121.90px;width:0.90px;height:4.20px;background:#777;"></div>
<div class="abs" style="left:532.99px;top:123.20px;width:1.00px;height:1.10px;background:#777;"></div>
<span class="t" style="left:538.01px;top:118.05px;font-size:10.20px;line-height:12px;color:#333;font-family:'Liberation Sans',sans-serif;transform:scale(0.9307,1.0000);">13</span>
<div class="abs" style="left:552.91px;top:123.20px;width:1.00px;height:1.10px;background:#777;"></div>
<div class="abs" style="left:562.92px;top:121.90px;width:0.90px;height:4.20px;background:#777;"></div>
<div class="abs" style="left:572.84px;top:123.20px;width:1.00px;height:1.10px;background:#777;"></div>
<span class="t" style="left:577.87px;top:118.05px;font-size:10.20px;line-height:12px;color:#333;font-family:'Liberation Sans',sans-serif;transform:scale(0.9126,1.0000);">14</span>
<div class="abs" style="left:592.76px;top:123.20px;width:1.00px;height:1.10px;background:#777;"></div>
<div class="abs" style="left:602.77px;top:121.90px;width:0.90px;height:4.20px;background:#777;"></div>
<div class="abs" style="left:612.69px;top:123.20px;width:1.00px;height:1.10px;background:#777;"></div>
<span class="t" style="left:617.71px;top:118.05px;font-size:10.20px;line-height:12px;color:#333;font-family:'Liberation Sans',sans-serif;transform:scale(0.9216,1.0000);">15</span>
<div class="abs" style="left:632.61px;top:123.20px;width:1.00px;height:1.10px;background:#777;"></div>
<div class="abs" style="left:642.62px;top:121.90px;width:0.90px;height:4.20px;background:#777;"></div>
<div class="abs" style="left:652.54px;top:123.20px;width:1.00px;height:1.10px;background:#777;"></div>
<span class="t" style="left:657.56px;top:118.05px;font-size:10.20px;line-height:12px;color:#333;font-family:'Liberation Sans',sans-serif;transform:scale(0.9307,1.0000);">16</span>
<div class="abs" style="left:672.46px;top:123.20px;width:1.00px;height:1.10px;background:#777;"></div>
<div class="abs" style="left:682.47px;top:121.90px;width:0.90px;height:4.20px;background:#777;"></div>
<div class="abs" style="left:692.39px;top:123.20px;width:1.00px;height:1.10px;background:#777;"></div>
<span class="t" style="left:697.41px;top:118.05px;font-size:10.20px;line-height:12px;color:#333;font-family:'Liberation Sans',sans-serif;transform:scale(0.9307,1.0000);">17</span>
<div class="abs" style="left:712.31px;top:123.20px;width:1.00px;height:1.10px;background:#777;"></div>
<div class="abs" style="left:722.32px;top:121.90px;width:0.90px;height:4.20px;background:#777;"></div>
<div class="abs" style="left:732.24px;top:123.20px;width:1.00px;height:1.10px;background:#777;"></div>
<span class="t" style="left:737.26px;top:118.05px;font-size:10.20px;line-height:12px;color:#333;font-family:'Liberation Sans',sans-serif;transform:scale(0.9307,1.0000);">18</span>
<div class="abs" style="left:752.16px;top:123.20px;width:1.00px;height:1.10px;background:#777;"></div>
<div class="abs" style="left:762.17px;top:121.90px;width:0.90px;height:4.20px;background:#777;"></div>
<div class="abs" style="left:772.09px;top:123.20px;width:1.00px;height:1.10px;background:#777;"></div>
<span class="t" style="left:777.11px;top:118.05px;font-size:10.20px;line-height:12px;color:#333;font-family:'Liberation Sans',sans-serif;transform:scale(0.9307,1.0000);">19</span>
<div class="abs" style="left:792.01px;top:123.20px;width:1.00px;height:1.10px;background:#777;"></div>
<svg class="abs" style="left:21.40px;top:114.60px;" width="8.6" height="22" viewBox="0 0 8.6 22"><path d="M0.5 0.5H8.1V2.8L4.3 6.6L0.5 2.8Z" fill="#fff" stroke="#8a8a8a" stroke-width="0.9"/><path d="M0.5 17.2V14.2L4.3 10.4L8.1 14.2V17.2Z" fill="#fff" stroke="#8a8a8a" stroke-width="0.9"/><rect x="0.5" y="17.2" width="7.6" height="4" fill="#fff" stroke="#8a8a8a" stroke-width="0.9"/></svg>
<svg class="abs" style="left:756.90px;top:120.40px;" width="8.8" height="11.4" viewBox="0 0 8.8 11.4"><path d="M0.5 10.8V6.6L4.4 2.6L8.3 6.6V10.8Z" fill="#fff" stroke="#8a8a8a" stroke-width="0.9"/></svg>
<div class="abs" style="left:0;top:0;width:800px;height:120px;opacity:0.93">
<span><span class="t" style="left:334.31px;top:50.95px;font-size:42.20px;line-height:47px;color:#f6821f;font-family:'Liberation Sans',sans-serif;transform:scale(0.9951,1.0000);font-weight:700;">u</span><span class="t" style="left:363.53px;top:50.95px;font-size:42.20px;line-height:47px;color:#1a75bb;font-family:'Liberation Sans',sans-serif;transform:scale(0.9902,1.0000);font-weight:700;">n</span><span class="t" style="left:390.15px;top:50.95px;font-size:42.20px;line-height:47px;color:#1a75bb;font-family:'Liberation Sans',sans-serif;transform:scale(1.2931,1.0000);font-weight:700;">i</span><span class="t" style="left:406.75px;top:50.95px;font-size:42.20px;line-height:47px;color:#1a75bb;font-family:'Liberation Sans',sans-serif;transform:scale(1.0922,1.0000);font-weight:700;">c</span><span class="t" style="left:437.49px;top:50.95px;font-size:42.20px;line-height:47px;color:#1a75bb;font-family:'Liberation Sans',sans-serif;transform:scale(1.0933,1.0000);font-weight:700;">a</span></span>
<svg class="abs" style="left:391.80px;top:56.60px;" width="12.6" height="8.2" viewBox="0 0 12.6 8.2"><path d="M6.3 0L12.6 2.6L6.3 5.2L0 2.6Z" fill="#1a75bb"/><path d="M2.6 4.4V7Q6.3 9 10 7V4.4L6.3 6Z" fill="#1a75bb"/><path d="M11.6 3V6.6" stroke="#1a75bb" stroke-width="0.8"/></svg>
</div>
<svg class="abs" style="left:0.00px;top:0.00px;pointer-events:none;" width="800" height="600" viewBox="0 0 800 600"><path d="M5.5 159V595.5H795.5V159" fill="none" stroke="#f3f3f3" stroke-width="1"/><path d="M0 0H800V600H0Z M1.2 1.3V598.9H798.9V1.3Z" fill="#000" fill-rule="evenodd"/></svg>
</body></html>
